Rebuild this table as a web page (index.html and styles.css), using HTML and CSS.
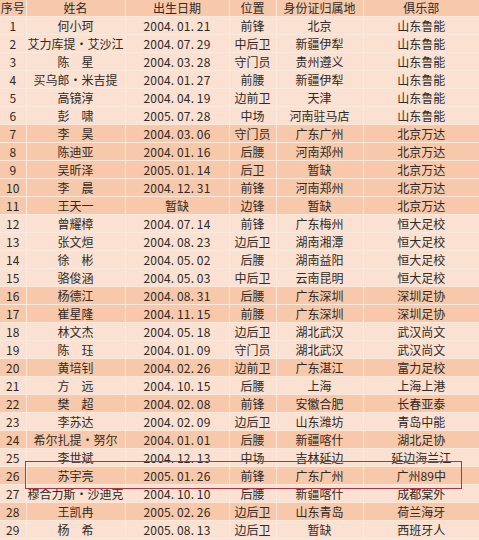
FILE: index.html
```html
<!DOCTYPE html>
<html lang="zh">
<head>
<meta charset="utf-8">
<link rel="stylesheet" href="styles.css">
</head>
<body>
<div class="sheet">
<table class="roster">
<colgroup>
<col class="c-no"><col class="c-name"><col class="c-date"><col class="c-pos"><col class="c-home"><col class="c-club">
</colgroup>
<thead>
<tr><th>序号</th><th>姓名</th><th>出生日期</th><th>位置</th><th>身份证归属地</th><th>俱乐部</th></tr>
</thead>
<tbody>
<tr class="lt"><td>1</td><td>何小珂</td><td class="d">2004.&#8201;01.&#8201;21</td><td>前锋</td><td>北京</td><td>山东鲁能</td></tr>
<tr class="lt"><td>2</td><td>艾力库提・艾沙江</td><td class="d">2004.&#8201;07.&#8201;29</td><td>中后卫</td><td>新疆伊犁</td><td>山东鲁能</td></tr>
<tr class="lt"><td>3</td><td>陈　星</td><td class="d">2004.&#8201;03.&#8201;28</td><td>守门员</td><td>贵州遵义</td><td>山东鲁能</td></tr>
<tr class="lt"><td>4</td><td>买乌郎・米吉提</td><td class="d">2004.&#8201;01.&#8201;27</td><td>前腰</td><td>新疆伊犁</td><td>山东鲁能</td></tr>
<tr class="lt"><td>5</td><td>高镜淳</td><td class="d">2004.&#8201;04.&#8201;19</td><td>边前卫</td><td>天津</td><td>山东鲁能</td></tr>
<tr class="lt"><td>6</td><td>彭　啸</td><td class="d">2005.&#8201;07.&#8201;28</td><td>中场</td><td>河南驻马店</td><td>山东鲁能</td></tr>
<tr class="dk"><td>7</td><td>李　昊</td><td class="d">2004.&#8201;03.&#8201;06</td><td>守门员</td><td>广东广州</td><td>北京万达</td></tr>
<tr class="dk"><td>8</td><td>陈迪亚</td><td class="d">2004.&#8201;01.&#8201;16</td><td>后腰</td><td>河南郑州</td><td>北京万达</td></tr>
<tr class="dk"><td>9</td><td>吴昕泽</td><td class="d">2005.&#8201;01.&#8201;14</td><td>后卫</td><td>暂缺</td><td>北京万达</td></tr>
<tr class="dk"><td>10</td><td>李　晨</td><td class="d">2004.&#8201;12.&#8201;31</td><td>前锋</td><td>河南郑州</td><td>北京万达</td></tr>
<tr class="dk"><td>11</td><td>王天一</td><td>暂缺</td><td>边锋</td><td>暂缺</td><td>北京万达</td></tr>
<tr class="lt"><td>12</td><td>曾耀樟</td><td class="d">2004.&#8201;07.&#8201;14</td><td>前锋</td><td>广东梅州</td><td>恒大足校</td></tr>
<tr class="lt"><td>13</td><td>张文烜</td><td class="d">2004.&#8201;08.&#8201;23</td><td>边后卫</td><td>湖南湘潭</td><td>恒大足校</td></tr>
<tr class="lt"><td>14</td><td>徐　彬</td><td class="d">2004.&#8201;05.&#8201;02</td><td>后腰</td><td>湖南益阳</td><td>恒大足校</td></tr>
<tr class="lt"><td>15</td><td>骆俊涵</td><td class="d">2004.&#8201;05.&#8201;03</td><td>中后卫</td><td>云南昆明</td><td>恒大足校</td></tr>
<tr class="dk"><td>16</td><td>杨德江</td><td class="d">2004.&#8201;08.&#8201;31</td><td>后腰</td><td>广东深圳</td><td>深圳足协</td></tr>
<tr class="dk"><td>17</td><td>崔星隆</td><td class="d">2004.&#8201;11.&#8201;15</td><td>前腰</td><td>广东深圳</td><td>深圳足协</td></tr>
<tr class="lt"><td>18</td><td>林文杰</td><td class="d">2004.&#8201;05.&#8201;18</td><td>边后卫</td><td>湖北武汉</td><td>武汉尚文</td></tr>
<tr class="lt"><td>19</td><td>陈　珏</td><td class="d">2004.&#8201;01.&#8201;09</td><td>守门员</td><td>湖北武汉</td><td>武汉尚文</td></tr>
<tr class="dk"><td>20</td><td>黄培钊</td><td class="d">2004.&#8201;02.&#8201;26</td><td>边前卫</td><td>广东湛江</td><td>富力足校</td></tr>
<tr class="lt"><td>21</td><td>方　远</td><td class="d">2004.&#8201;10.&#8201;15</td><td>后腰</td><td>上海</td><td>上海上港</td></tr>
<tr class="dk"><td>22</td><td>樊　超</td><td class="d">2004.&#8201;02.&#8201;08</td><td>前锋</td><td>安徽合肥</td><td>长春亚泰</td></tr>
<tr class="lt"><td>23</td><td>李苏达</td><td class="d">2004.&#8201;02.&#8201;09</td><td>边后卫</td><td>山东潍坊</td><td>青岛中能</td></tr>
<tr class="dk"><td>24</td><td>希尔扎提・努尔</td><td class="d">2004.&#8201;01.&#8201;01</td><td>后腰</td><td>新疆喀什</td><td>湖北足协</td></tr>
<tr class="lt"><td>25</td><td>李世斌</td><td class="d">2004.&#8201;12.&#8201;13</td><td>中场</td><td>吉林延边</td><td>延边海兰江</td></tr>
<tr class="dk"><td>26</td><td>苏宇亮</td><td class="d">2005.&#8201;01.&#8201;26</td><td>前锋</td><td>广东广州</td><td>广州89中</td></tr>
<tr class="lt"><td>27</td><td>穆合力斯・沙迪克</td><td class="d">2004.&#8201;10.&#8201;10</td><td>后腰</td><td>新疆喀什</td><td>成都棠外</td></tr>
<tr class="dk"><td>28</td><td>王凯冉</td><td class="d">2005.&#8201;02.&#8201;26</td><td>边后卫</td><td>山东青岛</td><td>荷兰海牙</td></tr>
<tr class="lt"><td>29</td><td>杨　希</td><td class="d">2005.&#8201;08.&#8201;13</td><td>边后卫</td><td>暂缺</td><td>西班牙人</td></tr>
</tbody>
</table>
<div class="mark"></div>
</div>
</body>
</html>
```

FILE: styles.css
```css
html, body {
  margin: 0;
  padding: 0;
  background: #fbe3d4;
}
.sheet {
  position: relative;
  width: 479px;
  height: 540px;
  overflow: hidden;
}
.roster {
  border-collapse: collapse;
  table-layout: fixed;
  width: 479px;
  font-family: "Noto Sans CJK SC", "Noto Sans", sans-serif;
  font-size: 12px;
  color: #2e2a28;
}
.c-no { width: 26px; }
.c-name { width: 99px; }
.c-date { width: 104px; }
.c-pos { width: 47px; }
.c-home { width: 87px; }
.c-club { width: 116px; }
.roster th, .roster td {
  padding: 0;
  text-align: center;
  white-space: nowrap;
  overflow: visible;
  border: 1px solid #fbe9de;
  line-height: 16px;
}
.roster th {
  height: 16px;
  font-weight: normal;
  background: #f7c9aa;
  border-top: none;
}
.roster td {
  height: 17px;
}
.roster td.d {
  letter-spacing: 0.2px;
}
.roster th:first-child, .roster td:first-child { border-left: none; }
.roster th:last-child, .roster td:last-child { border-right: none; }
.roster tr.lt td { background: #fbe1d1; }
.roster tr.dk td { background: #f7c8a9; }
.mark {
  position: absolute;
  left: 25px;
  top: 461px;
  width: 435px;
  height: 26px;
  border: 1px solid #b2343c;
}
```
